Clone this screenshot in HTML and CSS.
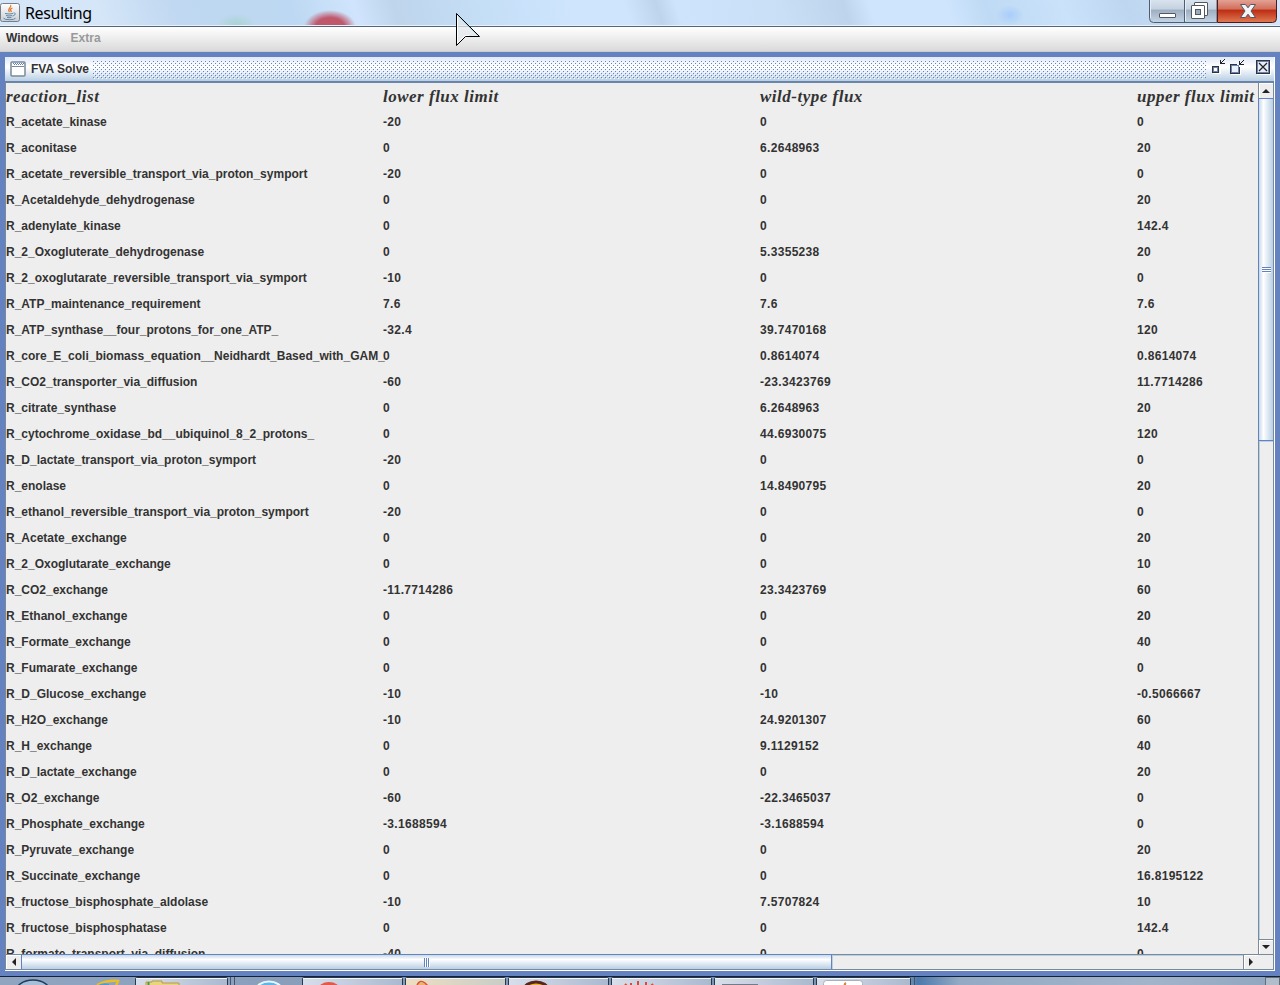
FILE: index.html
```
<!DOCTYPE html>
<html lang="en">
<head>
<meta charset="utf-8">
<title>Resulting</title>
<link rel="stylesheet" href="styles.css">
</head>
<body>
<div class="app">
  <header class="titlebar">
    <svg class="java-icon" width="20" height="22" viewBox="0 0 20 22">
      <defs><linearGradient id="jg" x2="0" y2="1"><stop stop-color="#fff"/><stop offset="1" stop-color="#c9ced4"/></linearGradient></defs>
      <rect x=".5" y="3.5" width="19" height="18" rx="2" fill="url(#jg)" stroke="#747f8a"/>
      <path d="M10.500 5c2 2-4 3.500-1 7M12.500 8c-3 1-2 2-1 4" fill="none" stroke="#e8792b" stroke-width="1.300"/>
      <path d="M5 13.500q4 1 8 0M6 15.500q3 1 6 0M7 17.300q2 1 4.500 0M3.500 18.200q1 1.500 6 1.500t6-1.500M13.500 13c3-.5 2 2.500-1 3" fill="none" stroke="#5d87a5"/>
    </svg>
    <span class="app-name">Resulting</span>
    <svg class="controls" width="128" height="24" viewBox="0 0 128 24">
      <defs>
        <linearGradient id="cg" x2="0" y2="1"><stop stop-color="#dbe5f0"/><stop offset=".42" stop-color="#c5d2e0"/><stop offset=".48" stop-color="#9fafc1"/><stop offset="1" stop-color="#c3d5e6"/></linearGradient>
        <linearGradient id="rg" x2="0" y2="1"><stop stop-color="#e5a79a"/><stop offset=".42" stop-color="#d1705c"/><stop offset=".48" stop-color="#be2d13"/><stop offset="1" stop-color="#df7b54"/></linearGradient>
      </defs>
      <path d="M.5-1V18.500q0 4 4 4H68V-1z" fill="url(#cg)" stroke="#505d6e"/>
      <path d="M35.500-1V22" stroke="#505d6e"/><path d="M36.500 0V21M1.500 0V18" stroke="#e5eef7"/>
      <path d="M68.500-1V22.500H123.500q4 0 4-4V-1z" fill="url(#rg)" stroke="#541a18"/>
      <rect x="10.500" y="13.500" width="16" height="4" rx=".5" fill="#fff" stroke="#515764"/>
      <rect x="45.500" y="2.500" width="13" height="13" rx=".5" fill="#fff" stroke="#515764"/>
      <rect x="42.500" y="5.500" width="13" height="13" rx=".5" fill="#fff" stroke="#515764"/>
      <rect x="46.500" y="9.500" width="5" height="5" fill="#9aabbd" stroke="#515764"/>
      <path d="M91.500 4.500h5l2.500 3.300 2.500-3.300h5l-4.500 6.500 4.500 6.500h-5L99 14.200l-2.500 3.300h-5l4.500-6.500z" fill="#f5f5f5" stroke="#535666" stroke-linejoin="round"/>
    </svg>
  </header>
  <nav class="menubar"><span>Windows</span><span class="disabled">Extra</span></nav>
  <main class="desktop">
    <section class="frame">
      <div class="frame-title">
        <svg class="frame-icon" width="16" height="16" viewBox="0 0 16 16"><rect x="1" y="1" width="14" height="14" rx="1" fill="#fff" stroke="#7a8a99" stroke-width="1.500"/><path d="M2 5.500h12" stroke="#7a8a99"/><path d="M3 2.500h11M4 3.500h9" stroke="#6382bf" stroke-dasharray="1 1"/></svg>
        <span>FVA Solve</span>
        <svg class="bumps" height="18"><defs><pattern id="dots" width="4" height="4" patternUnits="userSpaceOnUse"><path d="M0 0h1v1H0zM2 2h1v1H2z" fill="#6382bf"/><path d="M1 1h1v1H1zM3 3h1v1H3z" fill="#fff"/></pattern></defs><rect width="100%" height="18" fill="url(#dots)"/></svg>
        <svg class="frame-controls" width="68" height="24" viewBox="0 0 68 24" shape-rendering="crispEdges" fill="none">
          <path d="M7 16h7V9" stroke="#fff"/><rect x="7.500" y="10.500" width="4" height="4" fill="#fff" stroke="#6382bf"/><path d="M6 9h7v1H7v6H6zM12 10h1v6H7v-1h5z" fill="#333"/>
          <path d="M18.500 2.500l-4 4M14.500 2.500v4h4" stroke="#222"/>
          <path d="M25 17.500h9.500V10" stroke="#fff"/><rect x="25.500" y="8.500" width="7" height="7" fill="#e9f0f9" stroke="#6382bf"/><path d="M24 7h7v1h-6v9h-1zM33 10h1v7h-9v-1h8z" fill="#333"/>
          <path d="M37.500 3.500l-4 4M33.500 3.500v4h4" stroke="#222"/>
          <path d="M51 17.500h13.500V4" stroke="#fff"/><rect x="51.500" y="4.500" width="11" height="11" fill="#e4edf8" stroke="#6382bf"/><rect x="50.500" y="3.500" width="13" height="13" stroke="#333"/><path d="M53 6l8 8M61 6l-8 8" stroke="#222" shape-rendering="auto" stroke-width="1.200"/>
        </svg>
      </div>
      <div class="view">
        <div class="table" id="table"></div>
        <div class="vscroll"><div class="arrow up"><i></i></div><div class="vthumb"><b></b></div><div class="vtrack"></div><div class="arrow down"><i></i></div></div>
        <div class="hscroll"><div class="arrow left"><i></i></div><div class="hthumb"><b></b></div><div class="htrack"></div><div class="arrow right"><i></i></div></div>
        <div class="corner"></div>
      </div>
    </section>
  </main>
  <footer class="taskbar">
    <svg width="1280" height="9" viewBox="0 0 1280 9">
      <defs><linearGradient id="tb"><stop stop-color="#d8dfeb"/><stop offset="1" stop-color="#aab9cf"/></linearGradient><linearGradient id="ty"><stop stop-color="#eedfc0"/><stop offset="1" stop-color="#c8cdc8"/></linearGradient><linearGradient id="bg"><stop stop-color="#91a5c1"/><stop offset=".71" stop-color="#7791b0"/><stop offset=".717" stop-color="#4b79ac"/><stop offset=".75" stop-color="#94aac4"/><stop offset=".9" stop-color="#a2b4ca"/><stop offset="1" stop-color="#8fa5bf"/></linearGradient></defs>
      <rect width="1280" height="9" fill="url(#bg)"/>
      <g fill="url(#tb)" stroke="#26384d"><rect x="135.500" y=".5" width="92" height="12" rx="1"/><rect x="302.500" y=".5" width="100" height="12" rx="1"/><rect x="405.500" y=".5" width="100" height="12" rx="1" fill="url(#ty)"/><rect x="508.500" y=".5" width="100" height="12" rx="1"/><rect x="611.500" y=".5" width="100" height="12" rx="1"/><rect x="714.500" y=".5" width="99" height="12" rx="1"/><rect x="816.500" y=".5" width="94" height="12" rx="1"/></g>
      <path d="M136 1.500h91M303 1.500h99M406 1.500h99M509 1.500h99M612 1.500h99M715 1.500h98M817 1.500h93" stroke="#f3f6fa"/>
      <path d="M230.500 0v9M234.500 0v9M914.500 0v9" stroke="#42566f"/>
      <ellipse cx="33" cy="16" rx="18" ry="13" fill="#a9bfd5" stroke="#183e62" stroke-width="1.500"/>
      <path d="M97 8q10-5 21-4l-2 5" fill="none" stroke="#edbd25" stroke-width="2.500"/><path d="M97 9q5-4 12-2v2" fill="#419ee0"/>
      <path d="M146 5h6v-1h10v2h17v3h-33z" fill="#e8d57c" stroke="#b99a46"/><path d="M148.500 5v4" stroke="#3d9a4c" stroke-width="2"/>
      <ellipse cx="269" cy="13.500" rx="13" ry="9" fill="#5fb5e8" stroke="#e6f7ff" stroke-width="2"/>
      <ellipse cx="329" cy="13" rx="11" ry="8" fill="#e45847"/>
      <path d="M417 9V6h7l3 2h20v1z" fill="#f2b35d"/><path d="M417 8q3-6 8-2l3 3" fill="none" stroke="#d5523d" stroke-width="1.500"/>
      <ellipse cx="536" cy="13" rx="12" ry="8" fill="#e5b533" stroke="#5c2418" stroke-width="3"/>
      <path d="M625 7l2 2M631 6v3M638 4v5M646 5v4M653 7l-2 2" stroke="#df4633" stroke-width="2"/>
      <path d="M722 8h36" stroke="#737b86" stroke-width="2"/>
      <rect x="823.500" y="3.500" width="39" height="12" rx="3" fill="#fff" stroke="#a6b2c1"/><path d="M846 6q-2 1-1 3" stroke="#e78031" stroke-width="2"/>
      <rect x="1265.500" y=".5" width="14" height="12" fill="#b1bdca" stroke="#606e7c"/>
    </svg>
  </footer>
  <svg class="cursor" width="27" height="36" viewBox="0 0 27 36"><path d="M1.500 1.500V33.500L10.500 24.500H24.500z" fill="#e4e8ec" fill-opacity=".75" stroke="#000"/><path d="M2.500 4V31L10 23.500H14" fill="none" stroke="#fff"/><path d="M3 4L22 23" stroke="#7dd5d8" stroke-width=".7"/></svg>
</div>
<script src="table.js"></script>
</body>
</html>
```
FILE: styles.css
```
* { box-sizing: border-box; }
body { margin: 0; font: bold 12px/16px "Liberation Sans", Arial, sans-serif; color: #333; }
.app { position: relative; width: 1280px; height: 985px; overflow: hidden; display: flex; flex-direction: column; }
.titlebar { height: 27px; flex: none; display: flex; align-items: flex-start; border-bottom: 1px solid #566477; box-shadow: inset 0 -1px #e8f2fc;
  background:
    radial-gradient(ellipse 26px 17px at 330px 27px, #c0576b 0 55%, rgba(192,87,107,0) 100%),
    radial-gradient(ellipse 20px 12px at 236px 25px, #a9d4d2, transparent),
    radial-gradient(ellipse 14px 10px at 1010px 15px, #a9cdfa, transparent),
    linear-gradient(72deg, #d5e6f8 0 8%, #c0d8f1 14%, #bdd8f2 23%, #d0e5fd 28%, #bed5ec 31%, #c5dff7 38%, #cfe5fe 45%, #cfe5fe 49%, #bdd4ec 51.5%, #cee4fd 53%, #c9dff6 61%, #bdd4ec 66%, #cfe5fe 68%, #cfe5fe 74%, #bfdaf4 77%, #cae2fa 83%, #bfd6f1 88%, #d1e6fc 98%); }
.java-icon { flex: none; }
.app-name { font: 16px/27px "Noto Sans", sans-serif; color: #000; margin-left: 5px; flex: 1; letter-spacing: -.4px; }
.controls { margin-right: 3px; }
.menubar { height: 25px; flex: none; display: flex; gap: 12px; padding: 3px 6px; background: linear-gradient(#fff, #dadada); border-bottom: 1px solid #ccc; }
.disabled { color: #999; }
.desktop { height: 924px; flex: none; background: #6382bf; padding: 5px; }
.frame { height: 914px; display: flex; flex-direction: column; border-right: 1px solid #fff; border-bottom: 1px solid #fff; }
.frame-title { height: 26px; flex: none; display: flex; background: linear-gradient(#e1e9f7, #fff 42%, #b8cfe5); border-bottom: 2px solid #6b85aa; }
.frame-title > span { line-height: 24px; width: 57px; margin-left: 5px; white-space: nowrap; }
.frame-icon { margin: 4px 0 0 5px; }
.bumps { flex: 1; min-width: 0; margin: 4px 0 0 5px; }
.frame-controls { flex: none; }
.view { flex: 1; min-height: 0; display: grid; grid-template: 871px 16px / 1252px 16px; border-left: 1px solid #7a8a99; background: #eee; }
.table { overflow: hidden; display: flex; flex-direction: column; }
.row { display: grid; grid-template-columns: repeat(4, 377px); height: 26px; flex: none; line-height: 26px; white-space: nowrap; }
.row span + span { letter-spacing: .32px; }
.row.head { font: italic bold 17px/28px "Liberation Serif", serif; }
.row.head span { letter-spacing: .5px; }
.vscroll { display: flex; flex-direction: column; border-left: 1px solid #7a8a99; border-right: 1px solid #7a8a99; }
.hscroll { display: flex; border-top: 1px solid #7a8a99; border-bottom: 1px solid #7a8a99; }
.arrow { flex: none; display: flex; align-items: center; justify-content: center; background: #eee; box-shadow: inset 1px 1px #fff; }
.up, .down { height: 15px; }
.down { border-top: 1px solid #7a8a99; }
.left, .right { width: 15px; }
.right { border-left: 1px solid #7a8a99; }
.arrow i { border: 4px solid transparent; }
.up i { border-top: 0; border-bottom-color: #222; }
.down i { border-bottom: 0; border-top-color: #222; }
.left i { border-left: 0; border-right-color: #222; }
.right i { border-right: 0; border-left-color: #222; }
.vthumb, .hthumb { display: flex; align-items: center; justify-content: center; border: 1px solid #6382bf; }
.vthumb { height: 343px; flex: none; background: linear-gradient(90deg, #c7d9ea, #fff 32%, #b8cfe5); border-right: 0; margin-left: -1px; }
.hthumb { width: 811px; flex: none; background: linear-gradient(#c7d9ea, #fff 32%, #b8cfe5); border-bottom: 0; margin-top: -1px; }
.vthumb b { width: 9px; height: 6px; background: repeating-linear-gradient(#6382bf 0 1px, #fff 1px 2px); }
.hthumb b { height: 9px; width: 6px; background: repeating-linear-gradient(90deg, #6382bf 0 1px, #fff 1px 2px); }
.vtrack, .htrack { flex: 1; box-shadow: inset 1px 1px #b8cfe5; }
.corner { border: 1px solid #7a8a99; border-width: 1px 1px 1px 0; }
.taskbar { height: 9px; flex: none; border-top: 1px solid #13223a; }
.taskbar svg { display: block; }
.cursor { position: absolute; left: 455px; top: 12px; }
```
FILE: table.js
```
const rows = `acetate_kinase|-20|0|0
aconitase|0|6.2648963|20
acetate_reversible_transport_via_proton_symport|-20|0|0
Acetaldehyde_dehydrogenase|0|0|20
adenylate_kinase|0|0|142.4
2_Oxogluterate_dehydrogenase|0|5.3355238|20
2_oxoglutarate_reversible_transport_via_symport|-10|0|0
ATP_maintenance_requirement|7.6|7.6|7.6
ATP_synthase__four_protons_for_one_ATP_|-32.4|39.7470168|120
core_E_coli_biomass_equation__Neidhardt_Based_with_GAM_|0|0.8614074|0.8614074
CO2_transporter_via_diffusion|-60|-23.3423769|11.7714286
citrate_synthase|0|6.2648963|20
cytochrome_oxidase_bd__ubiquinol_8_2_protons_|0|44.6930075|120
D_lactate_transport_via_proton_symport|-20|0|0
enolase|0|14.8490795|20
ethanol_reversible_transport_via_proton_symport|-20|0|0
Acetate_exchange|0|0|20
2_Oxoglutarate_exchange|0|0|10
CO2_exchange|-11.7714286|23.3423769|60
Ethanol_exchange|0|0|20
Formate_exchange|0|0|40
Fumarate_exchange|0|0|0
D_Glucose_exchange|-10|-10|-0.5066667
H2O_exchange|-10|24.9201307|60
H_exchange|0|9.1129152|40
D_lactate_exchange|0|0|20
O2_exchange|-60|-22.3465037|0
Phosphate_exchange|-3.1688594|-3.1688594|0
Pyruvate_exchange|0|0|20
Succinate_exchange|0|0|16.8195122
fructose_bisphosphate_aldolase|-10|7.5707824|10
fructose_bisphosphatase|0|0|142.4
formate_transport_via_diffusion|-40|0|0`.split("\n").map(line => ("R_" + line).split("|"));

const addRow = (cells, className) => {
  const row = document.createElement("div");
  row.className = className;
  for (const text of cells) {
    const cell = document.createElement("span");
    cell.textContent = text;
    row.append(cell);
  }
  document.getElementById("table").append(row);
};

addRow(["reaction_list", "lower flux limit", "wild-type flux", "upper flux limit"], "row head");
rows.forEach(cells => addRow(cells, "row"));
```
